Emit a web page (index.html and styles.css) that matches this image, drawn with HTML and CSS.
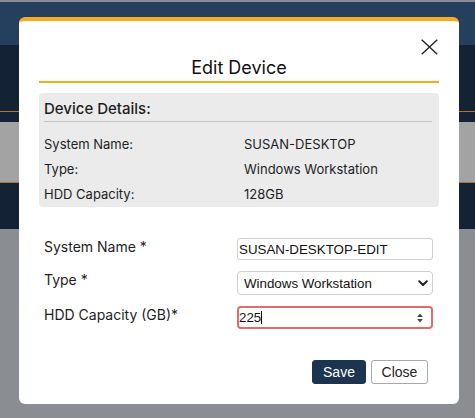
FILE: index.html
```html
<!DOCTYPE html>
<html>
<head>
<meta charset="utf-8">
<link rel="stylesheet" href="styles.css">
</head>
<body>
<div class="backdrop">
  <div class="band topline"></div>
  <div class="band nav"></div>
  <div class="band dark h66"></div>
  <div class="band orange"></div>
  <div class="band dark h10"></div>
  <div class="band light"></div>
  <div class="band orange"></div>
  <div class="band dark h46"></div>
  <div class="band rest"></div>
</div>

<div class="modal">
  <div class="modal-top">
    <button class="close-x" aria-label="Close">
      <svg width="17" height="16" viewBox="0 0 17 16"><path d="M0.7 0.7 L16.3 15.3 M16.3 0.7 L0.7 15.3" stroke="#222" stroke-width="1.4" fill="none"/></svg>
    </button>
  </div>
  <h2 class="title">Edit Device</h2>

  <div class="details">
    <div class="details-head">Device Details:</div>
    <div class="details-grid">
      <div>System Name:</div><div>SUSAN-DESKTOP</div>
      <div>Type:</div><div>Windows Workstation</div>
      <div>HDD Capacity:</div><div>128GB</div>
    </div>
  </div>

  <div class="form">
    <label class="lbl">System Name *</label>
    <input class="ctl text" type="text" value="SUSAN-DESKTOP-EDIT">
    <label class="lbl">Type *</label>
    <div class="ctl sel">
      <span>Windows Workstation</span>
      <svg width="10" height="7" viewBox="0 0 10 7"><path d="M1.2 1.3 L5 5 L8.8 1.3" stroke="#222" stroke-width="2" fill="none" stroke-linecap="round" stroke-linejoin="round"/></svg>
    </div>
    <label class="lbl">HDD Capacity (GB)*</label>
    <div class="ctl num">
      <span>225</span><span class="caret"></span>
      <span class="grow"></span>
      <svg width="6" height="10" viewBox="0 0 6 10"><path d="M3 0.5 L5.8 4 L0.2 4 Z M3 9.5 L5.8 6 L0.2 6 Z" fill="#444"/></svg>
    </div>
  </div>

  <div class="actions">
    <button class="btn save">Save</button>
    <button class="btn close">Close</button>
  </div>
</div>
</body>
</html>
```

FILE: styles.css
```css
html, body {
  margin: 0;
  padding: 0;
}
body {
  width: 475px;
  height: 418px;
  overflow: hidden;
  position: relative;
  font-family: Inter, "Liberation Sans", sans-serif;
  color: #1d1d1f;
}
.backdrop {
  display: flex;
  flex-direction: column;
  height: 418px;
}
.band { flex: none; }
.topline { height: 2px; background: #8a8d91; }
.nav { height: 43px; background: #253f5e; }
.dark { background: #142236; }
.h66 { height: 66px; }
.h10 { height: 10px; }
.h46 { height: 46px; }
.orange { height: 1px; background: #b87424; }
.light { height: 60px; background: #a3a3a3; }
.rest { flex: 1; background: #8a8d91; }

.modal {
  position: absolute;
  left: 19px;
  top: 17px;
  width: 440px;
  box-sizing: border-box;
  background: #fff;
  border-top: 4px solid #f8ab1e;
  border-radius: 6px;
  padding: 0 20px 20px;
}
.modal-top {
  display: flex;
  justify-content: flex-end;
  padding-top: 18px;
  height: 16px;
}
.close-x {
  border: 0;
  background: none;
  padding: 0;
  margin-right: 1px;
  width: 17px;
  height: 16px;
  display: block;
}
.close-x svg { display: block; }
.title {
  margin: 2px 0 10px;
  font-size: 18px;
  line-height: 22px;
  font-weight: 400;
  text-align: center;
  padding-bottom: 2px;
  border-bottom: 2px solid #f8ab1e;
  color: #111;
}
.details {
  background: #ebebeb;
  border-radius: 4px;
  padding: 0 7px 0 5px;
}
.details-head {
  font-size: 15px;
  line-height: 20px;
  font-weight: 500;
  padding: 6px 0 2px;
  border-bottom: 1px solid #c4c4c4;
}
.details-grid {
  display: grid;
  grid-template-columns: 200px 1fr;
  font-size: 13px;
  line-height: 25px;
  padding-top: 10px;
}
.form {
  display: grid;
  grid-template-columns: 193px 196px;
  row-gap: 11px;
  align-items: start;
  padding: 31px 0 0 5px;
}
.lbl {
  font-size: 14px;
  line-height: 18px;
  color: #1d1d1f;
}
.ctl {
  box-sizing: border-box;
  font-family: "Liberation Sans", Arial, sans-serif;
  font-size: 13.33px;
  color: #111;
  background: #fff;
  margin: 0;
}
.text {
  height: 22px;
  border: 1px solid #cfcfcf;
  border-radius: 3px;
  padding: 0 2px 0 1px;
  width: 196px;
  outline: none;
}
.sel {
  height: 24px;
  border: 1px solid #cfcfcf;
  border-radius: 4px;
  display: flex;
  align-items: center;
  justify-content: space-between;
  padding: 0 4px 0 6px;
}
.sel svg { display: block; }
.num {
  height: 23px;
  border: 2px solid #df6b6b;
  border-radius: 4px;
  display: flex;
  align-items: center;
  padding: 0 8px 0 0;
}
.caret {
  width: 1px;
  height: 13px;
  background: #111;
  margin-left: 0;
}
.grow { flex: 1; }
.num svg { display: block; }
.actions {
  display: flex;
  justify-content: flex-end;
  gap: 5px;
  padding: 31px 11px 0 0;
}
.btn {
  height: 24px;
  box-sizing: border-box;
  border-radius: 3px;
  font-family: "Liberation Sans", Arial, sans-serif;
  font-size: 14px;
  padding: 0;
  cursor: pointer;
}
.save {
  width: 54px;
  background: #1c3450;
  color: #fff;
  border: 1px solid #1c3450;
}
.close {
  width: 57px;
  background: #fff;
  color: #222;
  border: 1px solid #a8a8a8;
}
```
